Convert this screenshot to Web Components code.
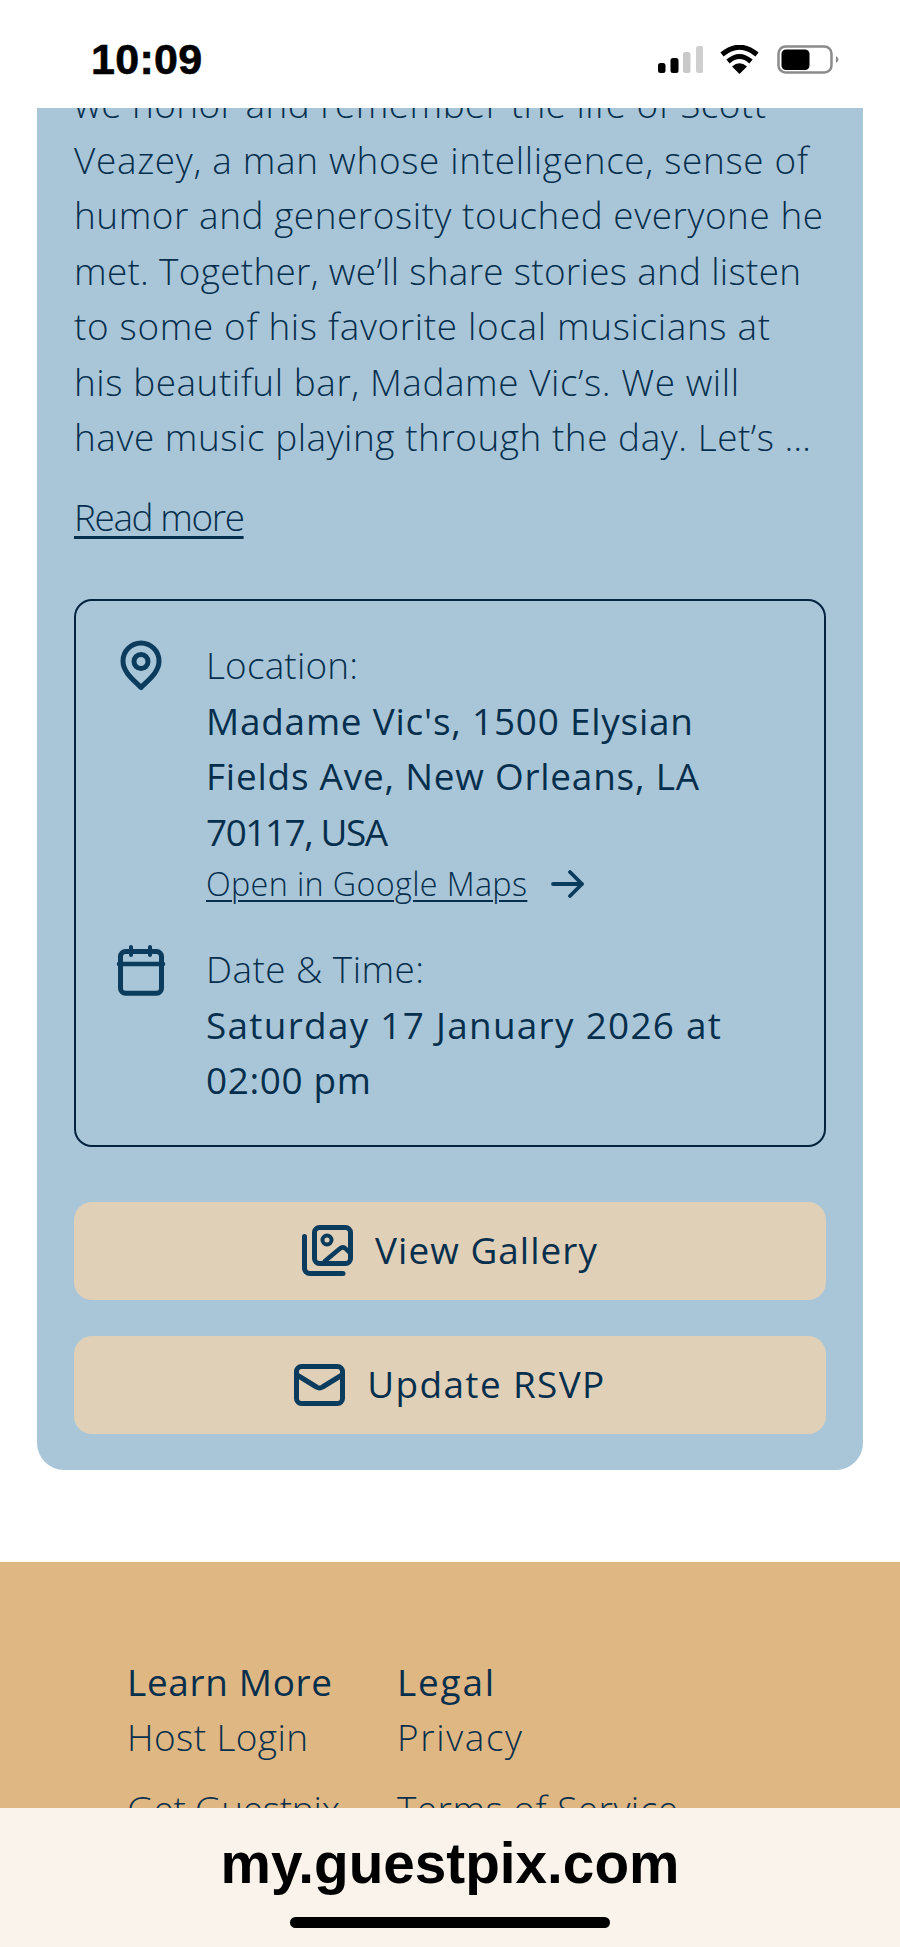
<!doctype html>
<html><head><meta charset="utf-8"><style>
html,body{margin:0;padding:0;background:#fff}
</style></head><body>
<app-shell>
<status-bar slot="status"></status-bar>
<event-card>
<fit-line w="692">we honor and remember the life of Scott</fit-line>
<fit-line w="734">Veazey, a man whose intelligence, sense of</fit-line>
<fit-line w="749">humor and generosity touched everyone he</fit-line>
<fit-line w="727">met. Together, we’ll share stories and listen</fit-line>
<fit-line w="696">to some of his favorite local musicians at</fit-line>
<fit-line w="665">his beautiful bar, Madame Vic’s. We will</fit-line>
<fit-line w="737">have music playing through the day. Let’s …</fit-line>
<info-box slot="info">
<info-row>
<svg slot="icon" width="55" height="55" viewBox="0 0 55 55" fill="none" stroke="#0b3c5d" stroke-width="5" stroke-linejoin="round"><path d="M28 49.500C22 43 10 35 10 23a18 18 0 0 1 36 0C46 35 34 43 28 49.500Z"/><circle cx="28" cy="23.500" r="7"/></svg>
<fit-line class="lab" w="152">Location:</fit-line>
<fit-line class="val" w="487">Madame Vic's, 1500 Elysian</fit-line>
<fit-line class="val" w="493">Fields Ave, New Orleans, LA</fit-line>
<fit-line class="val" w="182">70117, USA</fit-line>
<map-link></map-link>
</info-row>
<info-row>
<svg slot="icon" width="55" height="55" viewBox="0 0 55 55" fill="none" stroke="#0b3c5d" stroke-width="5" stroke-linecap="round"><rect x="7.500" y="9.500" width="41" height="41.700" rx="5"/><path d="M6 22H50" stroke-width="4.500"/><path d="M18 5V13M37 5V13" stroke-width="4"/></svg>
<fit-line class="lab" w="218">Date &amp; Time:</fit-line>
<fit-line class="val" w="515">Saturday 17 January 2026 at</fit-line>
<fit-line class="val" w="165">02:00 pm</fit-line>
</info-row>
</info-box>
<action-button slot="actions">
<svg slot="icon" width="51" height="51" viewBox="0 0 51 51" fill="none" stroke="#0b3c5d" stroke-width="5" stroke-linecap="round" stroke-linejoin="round"><rect x="12.500" y="2.500" width="36" height="36" rx="5"/><circle cx="25" cy="15" r="4.500" stroke-width="4"/><path d="M23 36L38 23.500Q41 21 44 24L48 28" stroke-width="4.500"/><path d="M2.500 11.500V43A5.500 5.500 0 0 0 8 48.500H41"/></svg>
<fit-line w="222">View Gallery</fit-line>
</action-button>
<action-button slot="actions">
<svg slot="icon" width="51" height="42" viewBox="0 0 51 42" fill="none" stroke="#0b3c5d" stroke-width="5" stroke-linecap="round" stroke-linejoin="round"><rect x="2.500" y="2.500" width="46" height="37" rx="5"/><path d="M3 11L22.500 23Q25.500 25 28.500 23L48 11"/></svg>
<fit-line w="237">Update RSVP</fit-line>
</action-button>
</event-card>
<site-footer>
<footer-col>
<fit-line slot="head" w="205">Learn More</fit-line>
<fit-line w="181">Host Login</fit-line>
<fit-line w="213">Get Guestpix</fit-line>
</footer-col>
<footer-col>
<fit-line slot="head" w="97">Legal</fit-line>
<fit-line w="125">Privacy</fit-line>
<fit-line w="281">Terms of Service</fit-line>
</footer-col>
</site-footer>
<url-bar slot="url"></url-bar>
</app-shell>
<script>
const INK='#062f4d';
function def(name,html,init){customElements.define(name,class extends HTMLElement{
  constructor(){super();this.attachShadow({mode:'open'}).innerHTML=html;}
  connectedCallback(){if(init)init(this);}
});}
def('app-shell',`<style>
:host{display:grid;grid-template-rows:108px 1fr 139px;width:900px;height:1947px;overflow:hidden;background:#fff;
font-family:"Open Sans","Liberation Sans",sans-serif;font-size:36.9px;line-height:55.5px;font-weight:300;color:${INK}}
.mid{overflow:hidden;min-height:0}
.inner{margin-top:-31px}
</style><slot name="status"></slot><div class="mid"><div class="inner"><slot></slot></div></div><slot name="url"></slot>`);
def('status-bar',`<style>
:host{display:flex;align-items:flex-start;justify-content:space-between;background:#fff;padding:0 60px 0 91px;position:relative;z-index:2}
.t{font:700 43px/30px "Liberation Sans",sans-serif;color:#000;margin-top:44px;letter-spacing:.3px;-webkit-text-stroke:.6px #000}
.r{display:flex;align-items:flex-start;margin-top:45px;gap:0}
.sig{margin-top:1px;margin-right:17px}.wifi{margin-right:18px}
</style><div class="t">10:09</div><div class="r">
<svg class="sig" width="45" height="27" viewBox="0 0 45 27"><rect x="0" y="17" width="7.500" height="10" rx="2.500"/><rect x="12.500" y="12" width="8" height="15" rx="2.500"/><rect x="25" y="6" width="7.500" height="21" rx="2.500" fill="#c9c9c9"/><rect x="38" y="0" width="7.500" height="27" rx="2.500" fill="#cfcfcf"/></svg>
<svg class="wifi" width="39" height="29" viewBox="0 0 39 29" fill="none" stroke="#000" stroke-width="5"><path d="M2 9.500Q19.500-5 37 9.500"/><path d="M8 16.500Q19.500 6.500 31 16.500"/><path d="M19.500 29L12 21.500Q19.500 15 27 21.500Z" fill="#000" stroke="none"/></svg>
<svg width="63" height="29" viewBox="0 0 63 29"><rect x="1.500" y="1.500" width="53" height="26" rx="7" fill="none" stroke="#8b8b8b" stroke-width="2.500"/><rect x="4.500" y="4.500" width="28" height="20.500" rx="4.500"/><path d="M59 11Q64 14.500 59 18Z" fill="#8b8b8b"/></svg>
</div>`);
def('event-card',`<style>
:host{display:block;margin:0 37px;background:#a9c6d9;border-radius:0 0 27px 27px;padding:0 37px 36px}
.more{display:block;margin-top:24px;text-decoration:underline;text-underline-offset:5px;text-decoration-thickness:2.500px}
.info{display:block;margin-top:54px}
.act{display:flex;flex-direction:column;gap:36px;margin-top:54.500px}
</style><slot></slot>
<fit-line class="more" w="171">Read more</fit-line>
<div class="info"><slot name="info"></slot></div><div class="act"><slot name="actions"></slot></div>`);
def('info-box',`<style>
:host{display:flex;flex-direction:column;gap:34px;box-sizing:border-box;height:548px;border:2.300px solid #03233f;border-radius:18px;padding:37px 37px 0 37px}
</style><slot></slot>`);
def('info-row',`<style>
:host{display:grid;grid-template-columns:55px 1fr;column-gap:38px}
.i{display:block;line-height:0}
::slotted(.val){font-weight:500}
</style><div class="i"><slot name="icon"></slot></div><div><slot></slot></div>`);
def('map-link',`<style>
:host{display:flex;align-items:center;gap:24px;height:48px;font-size:32.300px}
.l{text-decoration:underline;text-underline-offset:4px;text-decoration-thickness:2.300px}
svg{flex:none}
</style><fit-line class="l" w="321">Open in Google Maps</fit-line>
<svg width="33" height="30" viewBox="0 0 33 30" fill="none" stroke="#0b3c5d" stroke-width="3.800" stroke-linecap="round" stroke-linejoin="round"><path d="M2 15H31M19 3L31 15L19 27"/></svg>`);
def('action-button',`<style>
:host{display:flex;align-items:center;justify-content:center;gap:22px;height:98px;background:#e0d0b8;border-radius:18px;font-weight:500}
::slotted(svg){display:block}
</style><slot name="icon"></slot><slot></slot>`);
def('site-footer',`<style>
:host{display:flex;margin-top:92px;padding:93px 0 0 127px;background:#dfb782;height:300px}
</style><slot></slot>`);
def('footer-col',`<style>
:host{display:flex;flex-direction:column;width:270px;gap:16.500px}
.h{font-weight:500;margin-bottom:-16.500px}
</style><div class="h"><slot name="head"></slot></div><slot></slot>`);
def('url-bar',`<style>
:host{display:flex;flex-direction:column;align-items:center;background:#f9f3eb;position:relative;z-index:2}
.u{font:700 56.700px/52px "Liberation Sans",sans-serif;color:#000;margin-top:30px}
.bar{width:320px;height:11px;border-radius:6px;background:#000;margin-top:27px}
</style><div class="u">my.guestpix.com</div><div class="bar"></div>`);
def('fit-line',`<style>:host{display:block;white-space:nowrap}</style><span><slot></slot></span>`,el=>{
  const w=+el.getAttribute('w');const s=el.shadowRoot.querySelector('span');
  const n=el.textContent.length;
  if(!w||n<2)return;
  const nat=s.getBoundingClientRect().width;
  el.style.letterSpacing=((w-nat)/(n-1)).toFixed(3)+'px';
});
</script>
</body></html>
